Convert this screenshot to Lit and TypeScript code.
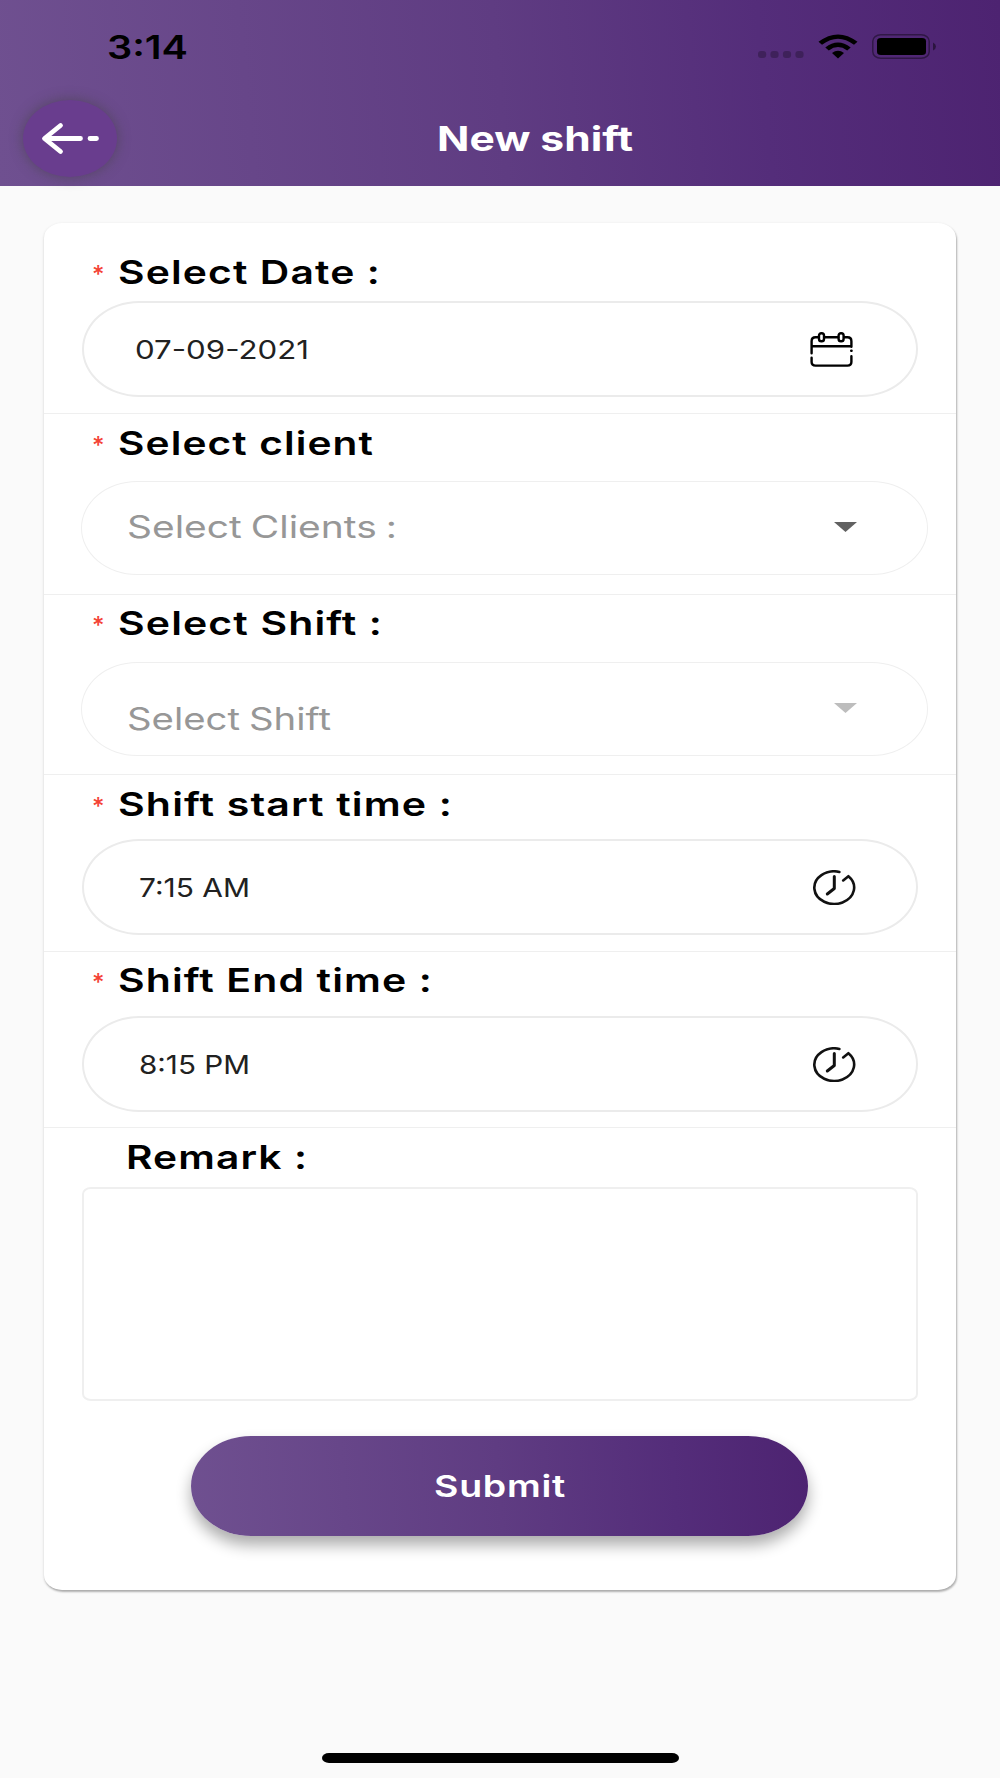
import { LitElement, html, css, svg, nothing } from "lit";
import { customElement, property } from "lit/decorators.js";

/** Single line of text set in an extended width: the glyphs are widened to fill `span` pixels. */
@customElement("wide-text")
class WideText extends LitElement {
  @property() text = "";
  @property({ type: Number }) span = 100;

  static styles = css`
    :host { display: block; white-space: pre; text-align: left; }
    .line { display: inline-block; transform-origin: 0 50%; }
  `;

  updated() {
    const line = this.renderRoot.querySelector(".line") as HTMLElement;
    line.style.transform = "none";
    const natural = line.getBoundingClientRect().width;
    if (natural) line.style.transform = `scaleX(${this.span / natural})`;
    this.style.width = `${this.span}px`;
  }

  render() {
    return html`<span class="line">${this.text}</span>`;
  }
}

const calendarIcon = html`
  <svg class="icon calendar" viewBox="0 0 43 35" fill="none" stroke="#000" stroke-width="2.4" stroke-linecap="round">
    <path d="M1.6 21.3V9.2Q1.6 5.3 5.6 5.3H8.4M14.6 5.3H28.2M34.4 5.3H37.4Q41.4 5.3 41.4 9.2V14.8M2 14.2H41" />
    <path d="M1.6 25.8V30Q1.6 33.6 5.6 33.6H37.4Q41.4 33.6 41.4 30V24.2M41.2 18.8H41.6" />
    <rect x="9" y="1.2" width="5" height="8" rx="2.3" />
    <rect x="28.6" y="1.2" width="5" height="8" rx="2.3" />
  </svg>`;

const clockIcon = html`
  <svg class="icon clock" viewBox="0 0 43 35" fill="none" stroke="#111" stroke-width="2.6" stroke-linecap="round" stroke-linejoin="round">
    <path d="M26.4 1.9A19.9 16.3 0 1 0 35.4 6.2L30.2 10.4" />
    <path d="M21.3 6.500V18.500L14.300 24" stroke-width="3" />
  </svg>`;

const caret = html`
  <svg class="caret" viewBox="0 0 23 10"><path d="M0 0H23L11.5 10Z" fill="currentColor" /></svg>`;

interface Field {
  key: string;
  label: string;
  labelSpan: number;
  value: string;
  valueSpan: number;
  kind: "input" | "select";
  icon: unknown;
}

const FIELDS: Field[] = [
  { key: "date", label: "Select Date :", labelSpan: 263, value: "07-09-2021", valueSpan: 174, kind: "input", icon: calendarIcon },
  { key: "client", label: "Select client", labelSpan: 256, value: "Select Clients :", valueSpan: 270, kind: "select", icon: caret },
  { key: "shift", label: "Select Shift :", labelSpan: 265, value: "Select Shift", valueSpan: 204, kind: "select", icon: caret },
  { key: "start", label: "Shift start time :", labelSpan: 335, value: "7:15 AM", valueSpan: 111, kind: "input", icon: clockIcon },
  { key: "end", label: "Shift End time :", labelSpan: 315, value: "8:15 PM", valueSpan: 111, kind: "input", icon: clockIcon },
];

@customElement("app-root")
class AppRoot extends LitElement {
  static styles = css`
    :host {
      display: flex;
      flex-direction: column;
      box-sizing: border-box;
      height: 1778px;
      background: #fafafa;
      font-family: Inter, "Liberation Sans", sans-serif;
      color: #000;
    }
    * { box-sizing: border-box; }
    svg { display: block; flex: none; }

    .header {
      flex: none;
      height: 186px;
      background: linear-gradient(85deg, #6f5090 0%, #5f3c82 50%, #542d7a 76%, #4d2371 100%);
    }
    .status {
      display: flex;
      align-items: center;
      height: 93px;
      padding: 0 63px 0 107px;
    }
    .time { font-size: 32px; font-weight: 600; line-height: 40px; margin: 2px auto 0 0; }
    .dots { width: 46px; height: 7px; margin: 16px 14px 0 0; }
    .wifi { width: 40px; height: 25px; margin-right: 14px; }
    .battery { width: 65px; height: 25px; }

    .bar {
      display: grid;
      grid-template-columns: 94px 1fr;
      align-items: center;
      height: 93px;
      padding: 0 0 3px 23px;
    }
    .back {
      display: grid;
      place-items: center;
      width: 94px;
      height: 77px;
      padding: 0;
      border: 0;
      border-radius: 50%;
      background: #693d8e;
      box-shadow: 0 0 12px 1px rgba(66, 66, 66, 0.5);
    }
    .arrow { width: 58px; height: 33px; }
    .title {
      justify-self: start;
      margin: 2px 0 0 320px;
      font-size: 33.5px;
      font-weight: 700;
      line-height: 40px;
      color: #fff;
    }

    .card {
      flex: none;
      width: 912px;
      height: 1367px;
      margin: 37px 0 0 44px;
      background: #fff;
      border-radius: 18px / 15px;
      box-shadow: 1px 2px 2px rgba(0, 0, 0, 0.24), 0 1px 3px rgba(0, 0, 0, 0.14);
    }
    .section { border-bottom: 1.5px solid #efefef; padding: 9px 38px 0; }
    .section.date { height: 191px; padding-top: 29px; }
    .section.client { height: 181px; }
    .section.shift { height: 180px; padding-top: 8px; }
    .section.start { height: 177px; }
    .section.end { height: 176px; padding-top: 8px; }
    .section.remark { height: auto; border: 0; }

    .label { display: flex; align-items: center; height: 40px; padding-left: 10px; }
    .star {
      width: 26px;
      font-size: 24px;
      font-weight: 500;
      line-height: 24px;
      padding-top: 5px;
      color: #f44336;
    }
    .label-text { font-size: 33px; font-weight: 600; line-height: 40px; letter-spacing: 0.9px; }
    .remark .label-text { margin-left: 34px; }

    .field { display: flex; align-items: center; }
    .input {
      width: 836px;
      height: 96px;
      margin-top: 9px;
      padding: 0 60px 0 51px;
      border: 2px solid #ebebeb;
      border-radius: 57px / 48px;
      color: #212121;
      font-size: 26px;
    }
    .input .value { margin-top: 1px; }
    .start .input, .end .input { margin-top: 15px; padding: 0 60px 0 55px; }
    .end .input { margin-top: 16px; }
    .select {
      width: 847px;
      height: 94px;
      margin: 18px 0 0 -1px;
      padding: 0 70px 0 45px;
      border: 1px solid #efefef;
      border-radius: 56px / 47px;
      color: #979797;
      font-size: 31px;
      word-spacing: -1.5px;
    }
    .shift .select { margin-top: 19px; }
    .value { line-height: 40px; margin-right: auto; }
    .client .value { margin-top: -3px; }
    .shift .value { margin-top: 20px; }
    .icon { width: 43px; height: 35px; }
    .calendar { margin-right: 3px; }
    .caret { width: 23px; height: 10px; margin-top: -3px; color: #616161; }
    .shift .caret { color: #bdbdbd; }

    .remark-box {
      display: block;
      width: 836px;
      height: 214px;
      margin-top: 10px;
      border: 2px solid #efefef;
      border-radius: 9px / 7px;
      background: #fff;
      resize: none;
      outline: none;
    }
    .submit {
      display: grid;
      place-items: center;
      width: 617px;
      height: 100px;
      margin: 35px auto 0 109px;
      padding: 0;
      border: 0;
      border-radius: 60px / 50px;
      background: linear-gradient(86deg, #6f5090 0%, #5f3c82 50%, #542d7a 78%, #4d2371 100%);
      box-shadow: 0 9px 15px rgba(0, 0, 0, 0.33);
      color: #fff;
      font: 600 30px/40px Inter, "Liberation Sans", sans-serif;
      letter-spacing: 0.6px;
    }
    .home {
      flex: none;
      width: 357px;
      height: 10px;
      margin: auto 0 15px 322px;
      border-radius: 7px / 5px;
      background: #000;
    }
  `;

  private renderLabel(text: string, span: number, required = true) {
    return html`
      <div class="label">
        ${required ? html`<span class="star">*</span>` : nothing}
        <wide-text class="label-text" .text=${text} .span=${span}></wide-text>
      </div>`;
  }

  private renderField(f: Field) {
    return html`
      <div class="section ${f.key}">
        ${this.renderLabel(f.label, f.labelSpan)}
        <div class="field ${f.kind}">
          <wide-text class="value" .text=${f.value} .span=${f.valueSpan}></wide-text>
          ${f.icon}
        </div>
      </div>`;
  }

  render() {
    return html`
      <header class="header">
        <div class="status">
          <wide-text class="time" .text=${"3:14"} .span=${81}></wide-text>
          <svg class="dots" viewBox="0 0 46 7" fill="#000" fill-opacity="0.25">
            ${[0, 12.4, 24.9, 37.4].map((x) => svg`<rect x=${x} y="0" width="8.2" height="7" rx="3" />`)}
          </svg>
          <svg class="wifi" viewBox="0 0 40 25">
            <path d="M.5 7.8Q20-7 39.5 7.8L36 10.8Q20-1.5 4 10.8Z" />
            <path d="M7.3 13.4Q20 3.8 32.7 13.4L29.2 16.4Q20 9.5 10.8 16.4Z" />
            <path d="M14 19Q20 14.5 26 19L20 24.5Z" />
          </svg>
          <svg class="battery" viewBox="0 0 65 25">
            <rect x=".8" y=".8" width="56.4" height="23.4" rx="8" ry="6.5" fill="none" stroke="#000" stroke-opacity=".4" stroke-width="1.5" />
            <rect x="5" y="4" width="49" height="17" rx="4" ry="3.3" />
            <path d="M61 8.5Q64 10 64 12.5T61 16.5Z" fill-opacity=".45" />
          </svg>
        </div>
        <div class="bar">
          <button class="back" aria-label="Back">
            <svg class="arrow" viewBox="0 0 58 33" fill="none" stroke="#fff" stroke-width="4.8" stroke-linecap="round" stroke-linejoin="round">
              <path d="M19.5 3.5L3.5 16.5L19.5 29.5M5 16.5H39.5M49 16.5H55.5" />
            </svg>
          </button>
          <wide-text class="title" .text=${"New shift"} .span=${196}></wide-text>
        </div>
      </header>

      <main class="card">
        ${FIELDS.map((f) => this.renderField(f))}
        <div class="section remark">
          ${this.renderLabel("Remark :", 182, false)}
          <textarea class="remark-box" aria-label="Remark"></textarea>
          <button class="submit">
            <wide-text .text=${"Submit"} .span=${132}></wide-text>
          </button>
        </div>
      </main>
      <div class="home"></div>
    `;
  }
}
